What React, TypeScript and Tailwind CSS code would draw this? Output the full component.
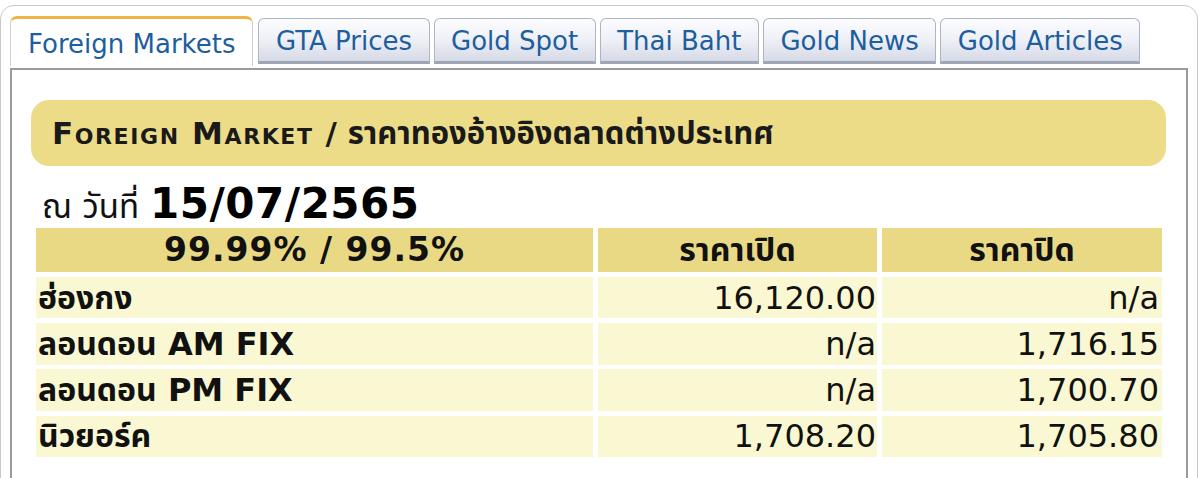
const tabs = ['Foreign Markets', 'GTA Prices', 'Gold Spot', 'Thai Baht', 'Gold News', 'Gold Articles'];

const rows = [
  { label: 'ฮ่องกง', open: '16,120.00', close: 'n/a' },
  { label: 'ลอนดอน AM FIX', open: 'n/a', close: '1,716.15' },
  { label: 'ลอนดอน PM FIX', open: 'n/a', close: '1,700.70' },
  { label: 'นิวยอร์ค', open: '1,708.20', close: '1,705.80' },
];

const font = { fontFamily: '"DejaVu Sans", "Noto Sans Thai", "Noto Sans", sans-serif' };

export default function App() {
  return (
    <div className="w-[1200px] h-[478px] overflow-hidden bg-white" style={font}>
      {/* outer card */}
      <div className="mt-[5px] w-[1198px] h-[490px] rounded-[14px] border border-[#c9c9c9] pl-[9px]">
        {/* tab strip */}
        <div className="flex items-end gap-[4px] mt-[10px] h-[50px]">
          {tabs.map((t, i) =>
            i === 0 ? (
              <div
                key={t}
                className="h-[50px] px-[17px] pt-[3px] flex items-center rounded-t-[7px] border-t-[3px] border-x border-t-[#f0b445] border-x-[#cfcfcf] bg-white text-[26px] text-[#1d5e9e] mr-[1px]"
              >
                {t}
              </div>
            ) : (
              <div
                key={t}
                className="h-[46px] mb-[2px] px-[16.5px] pt-[3px] flex items-center rounded-t-[6px] border border-[#adb4c2] border-b-[3px] border-b-[#9ea6b5] bg-gradient-to-b from-[#fdfdff] via-[#eef0f7] to-[#d6dae6] text-[26px] text-[#1d5e9e]"
              >
                {t}
              </div>
            )
          )}
        </div>

        {/* content panel */}
        <div className="mt-[2px] w-[1178px] h-[430px] border-2 border-[#9b9b9b] pt-[30px] pl-[19px] pr-[20px]">
          <div className="h-[66px] rounded-[18px] bg-[#ecdc88] flex items-center pl-[21px] text-[31px] font-bold text-[#1a1a1a]">
            <span className="[font-variant:small-caps] tracking-[1.6px]">Foreign Market</span>
            <span className="ml-[12px]">/ ราคาทองอ้างอิงตลาดต่างประเทศ</span>
          </div>

          <div className="mt-[6px] ml-[11px] flex items-baseline h-[56px]">
            <span className="text-[33px] text-[#111]">ณ วันที่</span>
            <span className="ml-[11px] text-[42px] font-bold text-black tracking-[0.5px]">15/07/2565</span>
          </div>

          <div className="ml-[5px] grid grid-cols-[557px_279px_280px] gap-x-[5px] gap-y-[4.8px] text-[32px] text-[#111]">
            <div className="h-[44px] bg-[#e9d985] flex items-center justify-center font-bold text-[33px] tracking-[1px]">
              99.99% / 99.5%
            </div>
            <div className="h-[44px] bg-[#e9d985] flex items-center justify-center font-bold">ราคาเปิด</div>
            <div className="h-[44px] bg-[#e9d985] flex items-center justify-center font-bold">ราคาปิด</div>
            {rows.map((r) => (
              <>
                <div key={r.label} className="h-[41.5px] bg-[#faf8d2] flex items-center pl-[2px] font-bold">
                  {r.label}
                </div>
                <div className="h-[41.5px] bg-[#faf8d2] flex items-center justify-end pr-[1px]">{r.open}</div>
                <div className="h-[41.5px] bg-[#faf8d2] flex items-center justify-end pr-[3px]">{r.close}</div>
              </>
            ))}
          </div>
        </div>
      </div>
    </div>
  );
}
